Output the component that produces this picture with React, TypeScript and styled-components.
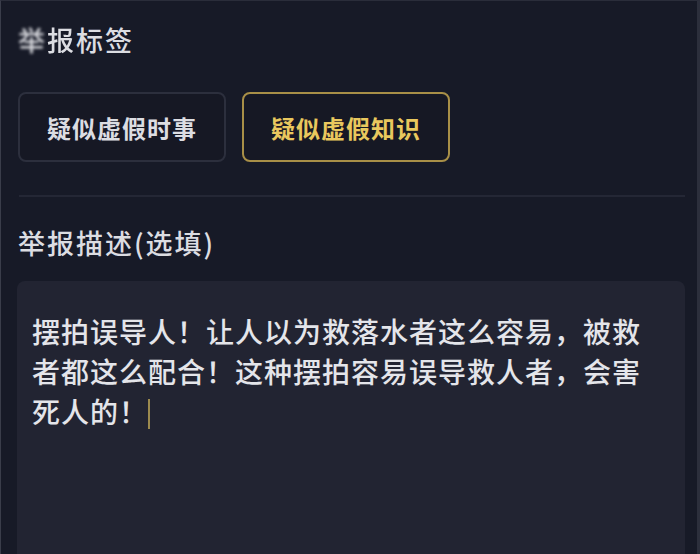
import React from "react";
import styled, { createGlobalStyle } from "styled-components";

const GlobalStyle = createGlobalStyle`
  html, body {
    margin: 0;
    padding: 0;
    background: #171a27;
  }
  * { box-sizing: border-box; }
`;

const FONT = `"Noto Sans CJK SC", "Noto Sans", sans-serif`;

const Screen = styled.div`
  width: 700px;
  height: 554px;
  overflow: hidden;
  background: #171a27;
  border-left: 1px solid #3a3d4a;
  border-top: 1px solid #2a2d3a;
  border-right: 3px solid #2c2f3c;
  display: flex;
  flex-direction: column;
  padding: 21px 12px 0 16px;
  font-family: ${FONT};
  color: #e2e3e8;
`;

const SectionTitle = styled.div`
  font-size: 27px;
  line-height: 36px;
  letter-spacing: 2px;
  font-weight: 500;
  color: #dcdde2;
  margin-left: 1px;
`;

const Blurred = styled.span<{ $amount: number }>`
  filter: blur(${(p) => p.$amount}px);
`;

const TagRow = styled.div`
  display: flex;
  gap: 16px;
  margin-top: 34px;
  margin-left: 1px;
`;

const Tag = styled.button<{ $active?: boolean }>`
  width: 208px;
  height: 70px;
  border-radius: 8px;
  background: #161824;
  border: 2px solid ${(p) => (p.$active ? "#a88f47" : "#2c2f3d")};
  color: ${(p) => (p.$active ? "#e9c85e" : "#dcdde2")};
  font-family: ${FONT};
  font-size: 24px;
  font-weight: 600;
  letter-spacing: 1px;
  padding: 0;
  display: flex;
  align-items: center;
  justify-content: center;
`;

const Divider = styled.div`
  height: 2px;
  background: #242735;
  margin-top: 33px;
  margin-left: 2px;
`;

const Label = styled.div`
  margin-top: 28px;
  font-size: 27px;
  line-height: 36px;
  letter-spacing: 2px;
  font-weight: 500;
  color: #dcdde2;
  margin-left: 1px;
`;

const TextBox = styled.div`
  margin-top: 20px;
  flex: 1;
  background: #222432;
  border-radius: 8px 8px 0 0;
  padding: 30px 30px 0 15px;
  font-size: 28px;
  line-height: 40px;
  letter-spacing: 1px;
  font-weight: 500;
  color: #e4e5ea;
`;

const Caret = styled.span`
  display: inline-block;
  width: 2px;
  height: 30px;
  background: #9c8a4e;
  vertical-align: -6px;
  margin-left: 0;
`;

export default function App() {
  return (
    <>
      <GlobalStyle />
      <Screen>
        <SectionTitle>
          <Blurred $amount={1.6}>举</Blurred>
          <Blurred $amount={0.7}>报</Blurred>标签
        </SectionTitle>
        <TagRow>
          <Tag>疑似虚假时事</Tag>
          <Tag $active>疑似虚假知识</Tag>
        </TagRow>
        <Divider />
        <Label>举报描述(选填)</Label>
        <TextBox>
          摆拍误导人！让人以为救落水者这么容易，被救者都这么配合！这种摆拍容易误导救人者，会害死人的！
          <Caret />
        </TextBox>
      </Screen>
    </>
  );
}
